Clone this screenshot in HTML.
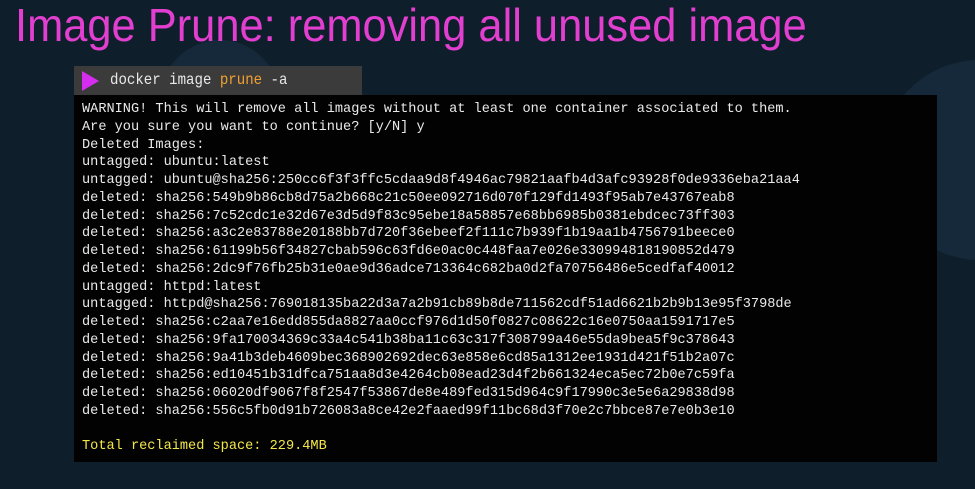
<!DOCTYPE html>
<html><head><style>
body{margin:0;width:975px;height:489px;background:#0f1e2b;overflow:hidden;position:relative;font-family:"Liberation Sans",sans-serif}
.c{position:absolute;border-radius:50%;background:#15293a}
h1{position:absolute;left:15px;top:-2px;margin:0;font-weight:normal;font-size:46px;color:#e23fd0;white-space:nowrap;transform:scaleX(.944);transform-origin:0 0}
.bar{position:absolute;left:74px;top:66px;width:288px;height:29px;background:#3b3b3b}
.bar .tri{position:absolute;left:8px;top:5px;width:0;height:0;border-left:17px solid #d52cf0;border-top:10px solid transparent;border-bottom:10px solid transparent}
.bar .t{position:absolute;left:36px;top:5px;font-family:"Liberation Mono",monospace;font-size:16px;color:#e8e8e8;transform:scaleX(.88);transform-origin:0 0;white-space:pre}
.o{color:#f0a030}
.term{position:absolute;left:74px;top:95px;width:863px;height:367px;background:#020202}
pre{position:absolute;left:82px;top:101px;margin:0;font-family:"Liberation Mono",monospace;font-size:13.6px;line-height:17.75px;color:#eaeaea}
.y{color:#f3e84a}
</style></head><body>
<div class="c" style="left:880px;top:60px;width:200px;height:200px"></div>
<div class="c" style="left:160px;top:40px;width:120px;height:120px"></div>
<h1>Image Prune: removing all unused image</h1>
<div class="bar"><div class="tri"></div><div class="t">docker image <span class="o">prune</span> -a</div></div>
<div class="term"></div>
<pre>WARNING! This will remove all images without at least one container associated to them.
Are you sure you want to continue? [y/N] y
Deleted Images:
untagged: ubuntu:latest
untagged: ubuntu@sha256:250cc6f3f3ffc5cdaa9d8f4946ac79821aafb4d3afc93928f0de9336eba21aa4
deleted: sha256:549b9b86cb8d75a2b668c21c50ee092716d070f129fd1493f95ab7e43767eab8
deleted: sha256:7c52cdc1e32d67e3d5d9f83c95ebe18a58857e68bb6985b0381ebdcec73ff303
deleted: sha256:a3c2e83788e20188bb7d720f36ebeef2f111c7b939f1b19aa1b4756791beece0
deleted: sha256:61199b56f34827cbab596c63fd6e0ac0c448faa7e026e330994818190852d479
deleted: sha256:2dc9f76fb25b31e0ae9d36adce713364c682ba0d2fa70756486e5cedfaf40012
untagged: httpd:latest
untagged: httpd@sha256:769018135ba22d3a7a2b91cb89b8de711562cdf51ad6621b2b9b13e95f3798de
deleted: sha256:c2aa7e16edd855da8827aa0ccf976d1d50f0827c08622c16e0750aa1591717e5
deleted: sha256:9fa170034369c33a4c541b38ba11c63c317f308799a46e55da9bea5f9c378643
deleted: sha256:9a41b3deb4609bec368902692dec63e858e6cd85a1312ee1931d421f51b2a07c
deleted: sha256:ed10451b31dfca751aa8d3e4264cb08ead23d4f2b661324eca5ec72b0e7c59fa
deleted: sha256:06020df9067f8f2547f53867de8e489fed315d964c9f17990c3e5e6a29838d98
deleted: sha256:556c5fb0d91b726083a8ce42e2faaed99f11bc68d3f70e2c7bbce87e7e0b3e10

<span class="y">Total reclaimed space: 229.4MB</span></pre>
</body></html>
